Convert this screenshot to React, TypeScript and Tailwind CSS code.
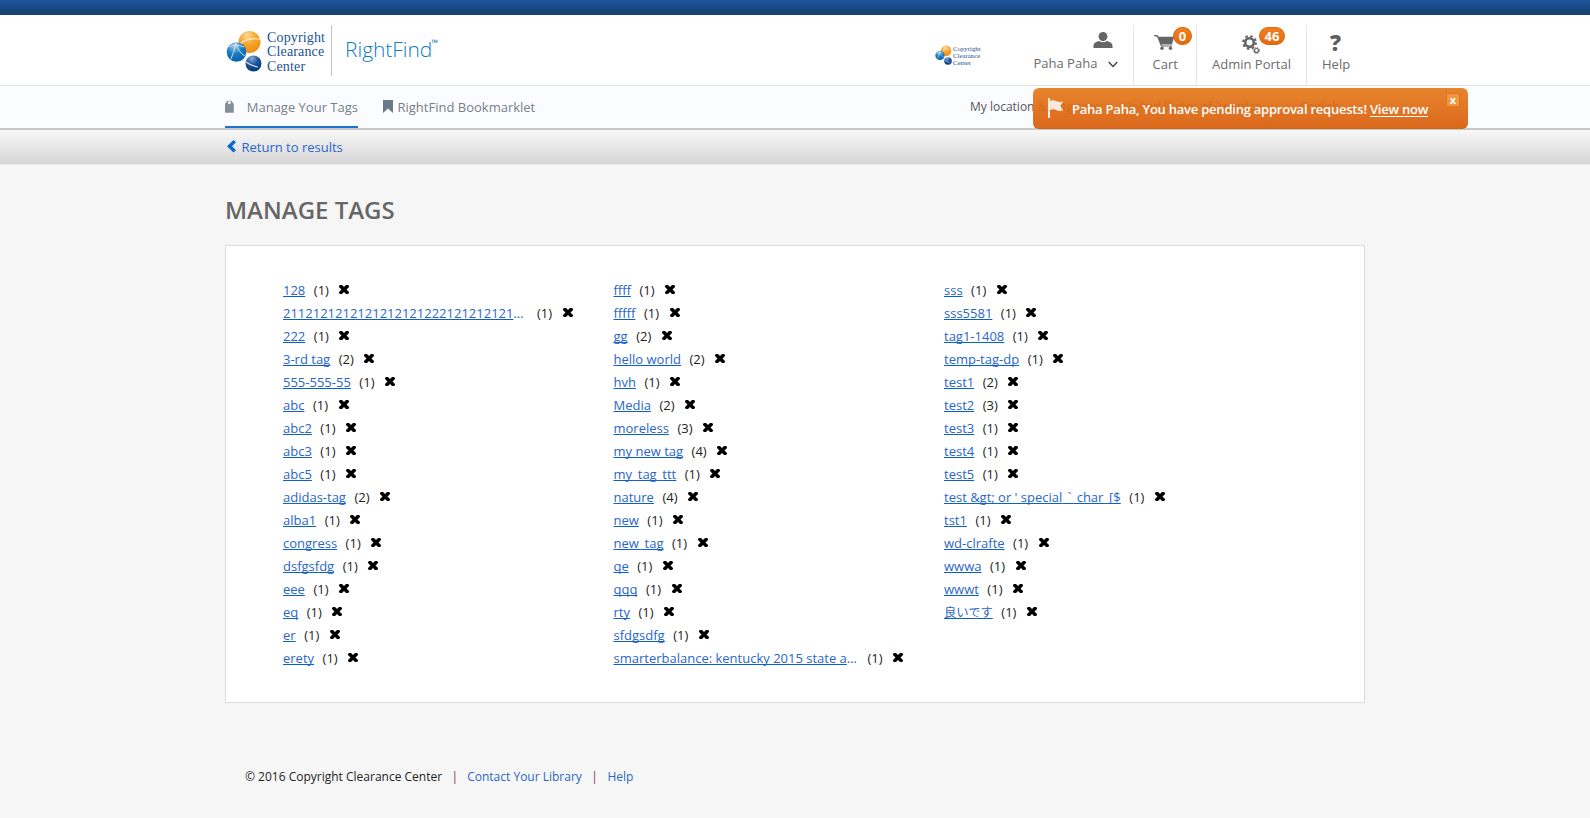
import React from "react";

type Tag = { name: string; count: number; kind?: "cut" | "cjk" };

const t = (name: string, count = 1, kind?: Tag["kind"]): Tag => ({ name, count, kind });

const columns: Tag[][] = [
  [
    t("128"),
    t("2112121212121212121222121212121", 1, "cut"),
    t("222"),
    t("3-rd tag", 2),
    t("555-555-55"),
    t("abc"),
    t("abc2"),
    t("abc3"),
    t("abc5"),
    t("adidas-tag", 2),
    t("alba1"),
    t("congress"),
    t("dsfgsfdg"),
    t("eee"),
    t("eq"),
    t("er"),
    t("erety"),
  ],
  [
    t("ffff"),
    t("fffff"),
    t("gg", 2),
    t("hello world", 2),
    t("hvh"),
    t("Media", 2),
    t("moreless", 3),
    t("my new tag", 4),
    t("my_tag_ttt"),
    t("nature", 4),
    t("new"),
    t("new_tag"),
    t("qe"),
    t("qqq"),
    t("rty"),
    t("sfdgsdfg"),
    t("smarterbalance: kentucky 2015 state a", 1, "cut"),
  ],
  [
    t("sss"),
    t("sss5581"),
    t("tag1-1408"),
    t("temp-tag-dp"),
    t("test1", 2),
    t("test2", 3),
    t("test3"),
    t("test4"),
    t("test5"),
    t("test &gt; or ' special ` char_[$"),
    t("tst1"),
    t("wd-clrafte"),
    t("wwwa"),
    t("wwwt"),
    t("良いです", 1, "cjk"),
  ],
];

function Cross() {
  return (
    <svg width="10" height="9" viewBox="0 0 10 9" className="mb-[2px] shrink-0" fill="#000">
      <path d="M1 0h2l2 2 2-2h2l1 1v1L7.5 4.5 10 7v1L9 9H7L5 7 3 9H1L0 8V7l2.5-2.5L0 2V1z" />
    </svg>
  );
}

function TagName({ name }: { name: string }) {
  const [before, after] = name.split("`");
  if (after === undefined) return <>{name}</>;
  return (
    <>
      {before.trimEnd()}
      <span className="tracking-[2px]"> `</span>
      {after}
    </>
  );
}

function TagRow({ tag }: { tag: Tag }) {
  const cut = tag.kind === "cut";
  return (
    <li className="flex h-[23px] items-center text-[13px] leading-[23px]">
      <a
        className={
          "block shrink-0 whitespace-nowrap text-[#2a66c8] " +
          (cut ? "w-[242px]" : tag.kind === "cjk" ? "text-[12.3px]" : "")
        }
      >
        <span className="underline decoration-[#0a62c8] decoration-1 underline-offset-1 [text-decoration-skip-ink:none]">
          <TagName name={tag.name} />
        </span>
        {cut && "…"}
      </a>
      <span className={cut ? "ml-[12px] text-[#222]" : "ml-[8.5px] text-[#222]"}>({tag.count})</span>
      <span className="ml-[10.500px] flex">
        <Cross />
      </span>
    </li>
  );
}

function Spheres({ className }: { className: string }) {
  return (
    <svg viewBox="0 0 36 42" className={className}>
      <defs>
        <radialGradient id="or" cx=".4" cy=".2" r=".8">
          <stop offset="0" stopColor="#fcd9a0" />
          <stop offset=".5" stopColor="#f7a529" />
          <stop offset="1" stopColor="#ee8d10" />
        </radialGradient>
        <radialGradient id="bl" cx=".4" cy=".2" r=".8">
          <stop offset="0" stopColor="#a5cdea" />
          <stop offset=".5" stopColor="#1b7cc4" />
          <stop offset="1" stopColor="#0a62ad" />
        </radialGradient>
        <radialGradient id="nv" cx=".4" cy=".2" r=".8">
          <stop offset="0" stopColor="#8aa9cf" />
          <stop offset=".5" stopColor="#1a5299" />
          <stop offset="1" stopColor="#063a80" />
        </radialGradient>
      </defs>
      <circle cx="23.5" cy="12" r="11" fill="url(#or)" />
      <path d="M13 15Q20 7 34 9" fill="none" stroke="#fdeccc" strokeWidth="1.1" />
      <circle cx="10.5" cy="22" r="9.8" fill="url(#bl)" />
      <path d="M5 29Q8 22 10 13M10 13Q12 22 19 26M3 17Q9 13 18 17" fill="none" stroke="#d6e9f7" strokeWidth=".9" />
      <circle cx="27.5" cy="33.5" r="8" fill="url(#nv)" />
      <path d="M20 32Q25 36 32 37" fill="none" stroke="#d6e3f2" strokeWidth="1.1" />
    </svg>
  );
}

function Gear({ size, className }: { size: number; className: string }) {
  return (
    <svg width={size} height={size} viewBox="0 0 16 16" className={className} fill="none" stroke="#666">
      <circle cx="8" cy="8" r="4.6" strokeWidth="2.8" />
      <circle cx="8" cy="8" r="6.8" strokeWidth="2.2" strokeDasharray="2.67 2.67" />
    </svg>
  );
}

function Chevron() {
  return (
    <svg width="8" height="5" viewBox="0 0 10 7" className="ml-[8px] mt-[8px]" fill="none" stroke="#333" strokeWidth="1.5">
      <path d="M.7 1 5 5.400 9.300 1" />
    </svg>
  );
}

const badge =
  "absolute flex h-[18px] items-center justify-center rounded-[9px] border border-[#d9650f] bg-gradient-to-b from-[#f08020] to-[#e46a0c] text-[13px] font-bold leading-none text-white";

export default function App() {
  return (
    <div className="flex h-[818px] w-[1590px] flex-col overflow-hidden bg-[#f6f6f6] font-['Open_Sans','Noto_Sans_CJK_JP',sans-serif] text-[13px] text-[#6c6c6c]">
      <div className="h-[15px] shrink-0 bg-gradient-to-b from-[#1b559d] to-[#163f6e]" />

      <header className="h-[71px] shrink-0 border-b border-[#dfe3e8] bg-white">
        <div className="mx-auto flex h-[70px] w-[1140px]">
          <div className="mt-[10px] flex h-[51px] w-[107px] border-r border-[#c4c4c4]">
            <Spheres className="ml-[1px] mt-[5px] h-[42px] w-[36px]" />
            <div className="ml-[5px] mt-[5.500px] whitespace-nowrap font-['Liberation_Serif',serif] text-[14px] leading-[14.7px] tracking-[0.15px] text-[#1a5490]">
              <div>Copyright</div>
              <div>Clearance</div>
              <div>Center</div>
            </div>
          </div>
          <div className="ml-[13px] mt-[18.500px] flex h-[30px] w-[121px] whitespace-nowrap text-[21px] font-light leading-[30px] tracking-[-0.05px] text-[#0d7cc2]">
            RightFind<span className="ml-[-1px] text-[9px] font-semibold leading-[17px] tracking-normal">™</span>
          </div>
          <div className="ml-[469px] mt-[30px] flex w-[60px]">
            <Spheres className="h-[20px] w-[17px]" />
            <div className="ml-[1px] whitespace-nowrap font-['Liberation_Serif',serif] text-[6.8px] leading-[7px] text-[#1a5490]">
              <div>Copyright</div>
              <div>Clearance</div>
              <div>Center</div>
            </div>
          </div>

          <div className="ml-[38.500px] flex w-[99.500px] flex-col">
            <svg width="20" height="16" viewBox="0 0 20 16" className="ml-[59.500px] mt-[17px]" fill="#666">
              <ellipse cx="10" cy="4.6" rx="4.4" ry="4.6" />
              <path d="M.5 16v-2.2C.5 11 4 9.400 6.200 9.100Q10 11.500 13.800 9.100C16 9.400 19.500 11 19.500 13.800V16z" />
            </svg>
            <div className="mt-[6px] flex items-center leading-[18px]">
              <span>Paha Paha</span>
              <svg width="10" height="7" viewBox="0 0 10 7" className="ml-[11px] mt-[2px]" fill="none" stroke="#444" strokeWidth="1.4">
                <path d="M.7 1 5 5.400 9.300 1" />
              </svg>
            </div>
          </div>
          <div className="mt-[10px] h-[60px] w-[63px] shrink-0 border-l border-[#e6e6e6]">
            <div className="relative h-[29px]">
              <svg width="20" height="15" viewBox="0 0 20 15" className="absolute left-[20px] top-[10px]" fill="#666">
                <path d="M0 0h3.500l1 1.800H20l-2 7.700H7.500l.5 1H18v1H7L3 1.600H.5z" />
                <circle cx="8" cy="13.200" r="1.700" />
                <circle cx="16.500" cy="13.200" r="1.700" />
              </svg>
              <span className={badge + " left-[39px] top-[2px] w-[19px]"}>0</span>
            </div>
            <div className="ml-[18.500px] mt-[1px] leading-[18px]">Cart</div>
          </div>
          <div className="mt-[10px] h-[60px] w-[110px] shrink-0 border-l border-[#e6e6e6]">
            <div className="relative h-[29px]">
              <Gear size={15} className="absolute left-[44.500px] top-[10px]" />
              <Gear size={7} className="absolute left-[56px] top-[22px]" />
              <span className={badge + " left-[62px] top-[2px] w-[26px]"}>46</span>
            </div>
            <div className="ml-[15px] mt-[1px] whitespace-nowrap leading-[18px]">Admin Portal</div>
          </div>
          <div className="mt-[10px] h-[60px] w-[58px] shrink-0 border-l border-[#e6e6e6]">
            <div className="flex h-[30px] pl-[23px] pt-[3px] text-[22px] font-extrabold leading-[28px] text-[#5f5f5f]">?</div>
            <div className="ml-[15px] leading-[18px]">Help</div>
          </div>
        </div>
      </header>

      <nav className="relative h-[44px] shrink-0 border-b-2 border-[#c9c9c9] bg-[#fafcff]">
        <div className="mx-auto flex h-[42px] w-[1140px] text-[#787f88]">
          <div className="flex h-[42px] w-[133px] items-start border-b-2 border-[#1c74cf] pt-[11px] leading-[20px]">
            <svg width="9" height="13" viewBox="0 0 9 13" className="mt-[3px]" fill="#858e99" fillRule="evenodd">
              <path d="M0 4 2.500.5h4L9 4v9H0zM4.500 1.200a1.500 1.500 0 1 0 0 3 1.500 1.500 0 0 0 0-3z" />
            </svg>
            <span className="ml-[13px] whitespace-nowrap">Manage Your Tags</span>
          </div>
          <div className="ml-[25px] flex items-start pt-[11px] leading-[20px]">
            <svg width="10" height="13" viewBox="0 0 10 13" className="mt-[3px]" fill="#6e7988">
              <path d="M0 0h10v13L5 8.500 0 13z" />
            </svg>
            <span className="ml-[4.500px] whitespace-nowrap">RightFind Bookmarklet</span>
          </div>
          <div className="ml-auto mr-[2px] flex w-[393px] items-start whitespace-nowrap pt-[12px] text-[12px] leading-[18px] text-[#555]">
            <span className="w-[153px]">My location &amp; language:</span>
            <span>United States of America</span>
            <Chevron />
            <span className="ml-[23px]">English</span>
            <Chevron />
          </div>
        </div>
        <div className="absolute left-[1033px] top-[2px] flex h-[41px] w-[435px] rounded-[6px] border-b border-[#d4620f] bg-gradient-to-b from-[#e67a1a]/92 to-[#d95b08]/92 text-white">
          <svg width="15" height="20" viewBox="0 0 15 20" className="ml-[15px] mt-[10px]" fill="#fbe8da">
            <path d="M0 0h2v20H0zM2 3q3-1.500 6 0t7 .5L12.500 8 15 12.500q-4 1-7-.5T2 12z" />
          </svg>
          <div className="ml-[9px] mt-[11px] whitespace-nowrap text-[13px] font-semibold leading-[20px] tracking-[-0.23px]">
            Paha Paha, You have pending approval requests! <span className="underline underline-offset-2">View now</span>
          </div>
          <div className="absolute left-[413px] top-[5px] flex h-[14px] w-[14px] items-center justify-center border border-[#e2751f] bg-[#f09540] pb-[2px] text-[11px] font-bold leading-none">
            x
          </div>
        </div>
      </nav>

      <div className="h-[35px] shrink-0 border-b border-[#ececec] bg-gradient-to-b from-[#f8f8f8] to-[#d6d6d6]">
        <div className="mx-auto flex w-[1140px] items-start pt-[7px] leading-[20px] text-[#2a66c8]">
          <svg width="9" height="13" viewBox="0 0 9 13" className="ml-[2px] mt-[3px]" fill="#0a66d0">
            <path d="M6.500 0 9 2.300 5 6.300l4 4L6.500 12.600 0 6.300z" />
          </svg>
          <span className="ml-[5.500px]">Return to results</span>
        </div>
      </div>

      <main className="mx-auto w-[1140px]">
        <h1 className="mt-[27px] h-[36px] whitespace-nowrap text-[24px] font-semibold leading-[36px] text-[#666]">MANAGE TAGS</h1>
        <section className="mt-[17px] flex h-[458px] border border-[#dcdcdc] bg-white pl-[57px] pt-[33px]">
          {columns.map((tags, i) => (
            <ul key={i} className="w-[330.500px] shrink-0">
              {tags.map((tag) => (
                <TagRow key={tag.name} tag={tag} />
              ))}
            </ul>
          ))}
        </section>
        <footer className="mt-[64px] flex pl-[20px] text-[12px] leading-[20px] text-[#222]">
          <span>© 2016 Copyright Clearance Center</span>
          <span className="ml-[9.500px] text-[#8a2a6a]">|</span>
          <a className="ml-[9px] text-[#2a66c8]">Contact Your Library</a>
          <span className="ml-[9.500px] text-[#8a2a6a]">|</span>
          <a className="ml-[9.500px] text-[#2a66c8]">Help</a>
        </footer>
      </main>
    </div>
  );
}
